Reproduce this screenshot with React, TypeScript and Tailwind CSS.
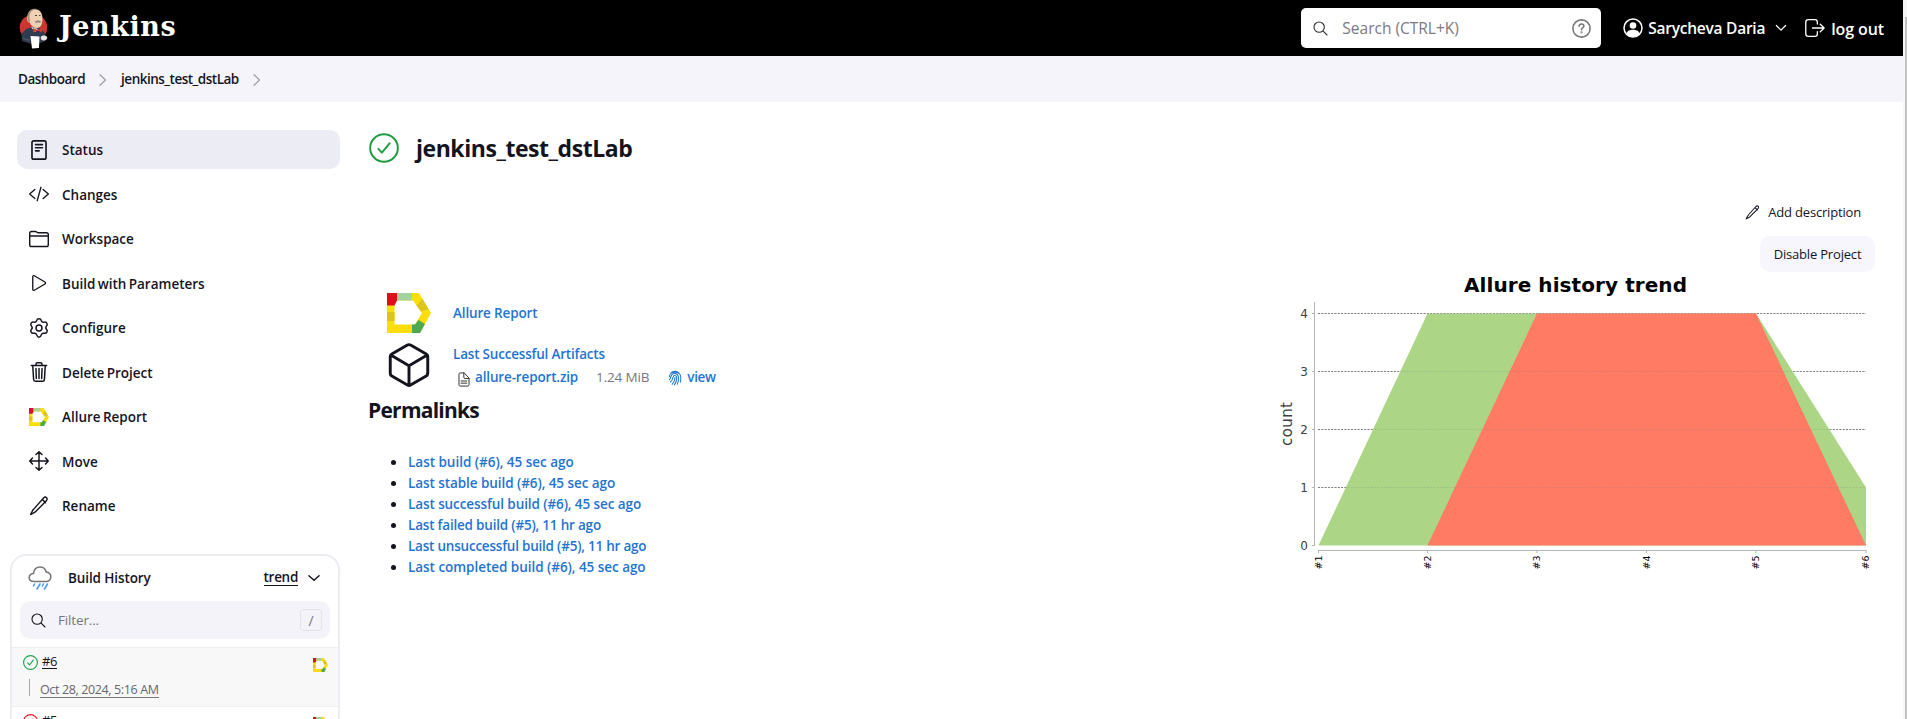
import React from "react";

const LINK = "text-[#1f74d1]";

function AllureLogo({ className }: { className: string }) {
  return (
    <svg viewBox="0 0 44 40" className={className} preserveAspectRatio="none">
      <path fillRule="evenodd" d="M0 0h32l12 20-11 20H0zM7.500 7.500v24H28L35 20 26 7.500z" fill="#fbdd0c" />
      <path d="M0 19h7.500v9H0z" fill="#dcc41e" />
      <path d="M0 0h10v7.500l-2.500 5H0z" fill="#dc0f1a" />
      <path d="M10 0h15v7.500H10z" fill="#a5d3a0" />
      <path d="m35.500 6 6 10-7.500 2.500-4.500-6z" fill="#dcc41e" />
      <path d="m31.500 27 6.500 4-5 9h-8v-8.500h3z" fill="#4ba952" />
    </svg>
  );
}

function Butler() {
  return (
    <svg viewBox="0 0 30 42" className="h-[42px] w-[30px]">
      <ellipse cx="14.500" cy="20.500" rx="13.800" ry="13" fill="#cc3631" />
      <path d="M3 34 2.500 27l4.500-5 6-2 8 1 4 4 3 6-4 4-8 3z" fill="#2f3b4e" />
      <path d="M8.500 9C9.500 3 14 1.500 18 2.500c4 1 5.500 5 5.500 9 0 6-2 9.500-5.500 9.500-3 0-6-2-7-5-3-1-3.500-4-2.500-7z" fill="#efd0b2" />
      <path d="M8.500 10C8.500 4 12 1.500 17 1.700 12 3.500 10.500 6 10.500 10L11 16c-2-1-2.500-3-2.500-6z" fill="#a58d78" />
      <path d="M16 8.500h2M20 8.500h1.500" stroke="#4b3a30" strokeWidth="1.200" fill="none" />
      <path d="M16.500 15.500c2-1.800 4-1.300 5 0" stroke="#8a7f78" strokeWidth="1.800" fill="none" />
      <path d="m12 20 4 5 3-3z" fill="#fff" />
      <path d="m14 21 4.500 2 4.500-2.500v5l-4.500-2-4.500 2z" fill="#d33833" />
      <path d="m11.500 29 9 .5L20 41l-7 .5z" fill="#fff" />
      <path d="M22 29.500c2-1.500 5-1 6 .5s-1 3.500-3 3.500-4-1-3-4z" fill="#e9e5e3" />
      <path d="M4 31c3 2 5 2 7 2" stroke="#566275" fill="none" />
    </svg>
  );
}

type IconProps = { className?: string; children: React.ReactNode; w?: number };
function Ion({ className = "size-5", children, w = 32 }: IconProps) {
  return (
    <svg viewBox="0 0 512 512" className={className} fill="none" stroke="currentColor" strokeWidth={w} strokeLinecap="round" strokeLinejoin="round">
      {children}
    </svg>
  );
}

const Pencil = ({ className }: { className?: string }) => (
  <Ion className={className} w={36}>
    <path d="M372 52c28-28 62-24 78-8s22 50-6 78L172 398c-12 12-26 22-42 30l-90 46 46-90c8-16 18-30 30-42zM338 86l84 84" />
  </Ion>
);

const Search = ({ className }: { className?: string }) => (
  <Ion className={className} w={38}>
    <path d="M210 34a176 176 0 10176 176A176 176 0 00210 34zM338 338l140 140" />
  </Ion>
);

const Check = ({ className, w = 34 }: { className: string; w?: number }) => (
  <Ion className={className} w={w}>
    <circle cx="256" cy="256" r="236" />
    <path d="m352 176-132 160-60-64" />
  </Ion>
);

const items = [
  {
    label: "Status",
    icon: (
      <Ion w={42}>
        <rect x="76" y="22" width="360" height="468" rx="44" />
        <path d="M168 118h176M168 198h176M168 278h92" />
      </Ion>
    ),
  },
  {
    label: "Changes",
    icon: (
      <Ion w={34}>
        <path d="M150 374 16 256l134-118M362 374l134-118-134-118M306 84l-96 344" />
      </Ion>
    ),
  },
  {
    label: "Workspace",
    icon: (
      <Ion w={36}>
        <path d="M18 400V112a48 48 0 0148-48h96c30 0 34 30 64 30h220a48 48 0 0148 48v258a48 48 0 01-48 48H66a48 48 0 01-48-48zM18 178h476" />
      </Ion>
    ),
  },
  {
    label: "Build with Parameters",
    icon: (
      <Ion w={34}>
        <path d="M96 96v320c0 26 18 38 40 26l272-160c20-12 20-40 0-52L136 70c-22-12-40 0-40 26z" />
      </Ion>
    ),
  },
  {
    label: "Configure",
    icon: (
      <Ion w={38}>
        <circle cx="256" cy="256" r="76" />
        <path d="M256 20c40 0 50 16 58 44 12 34 40 50 76 42 34-8 54-2 70 30 16 30 12 46-12 70-24 28-24 56 0 84 24 24 28 44 10 72-18 30-36 36-70 28-38-8-62 8-74 42-8 30-20 60-58 60s-50-30-58-60c-12-34-36-50-74-42-34 8-52 2-70-28-18-28-14-48 10-72 24-28 24-56 0-84-24-24-28-40-12-70 16-32 36-38 70-30 36 8 64-8 76-42 8-28 18-44 58-44z" />
      </Ion>
    ),
  },
  {
    label: "Delete Project",
    icon: (
      <Ion w={38}>
        <path d="m96 100 22 350c2 28 20 42 46 42h184c26 0 44-14 46-42l22-350M60 92h392M180 92V54c0-20 12-34 34-34h84c22 0 34 14 34 34v38M256 166v258M178 166l10 258M334 166l-10 258" />
      </Ion>
    ),
  },
  { label: "Allure Report", icon: <AllureLogo className="h-[18px] w-5" /> },
  {
    label: "Move",
    icon: (
      <Ion w={38}>
        <path d="m180 88 76-68 76 68M180 424l76 68 76-68M424 180l68 76-68 76M88 180l-68 76 68 76M256 24v464M24 256h464" />
      </Ion>
    ),
  },
  { label: "Rename", icon: <Pencil /> },
];

const permalinks = [
  { text: "Last build (#6), 45 sec ago", tracking: "tracking-[-0.02px]" },
  { text: "Last stable build (#6), 45 sec ago", tracking: "tracking-[-0.07px]" },
  { text: "Last successful build (#6), 45 sec ago", tracking: "tracking-[-0.09px]" },
  { text: "Last failed build (#5), 11 hr ago", tracking: "tracking-[-0.2px]" },
  { text: "Last unsuccessful build (#5), 11 hr ago", tracking: "tracking-[-0.22px]" },
  { text: "Last completed build (#6), 45 sec ago", tracking: "tracking-[-0.04px]" },
];

function Header() {
  return (
    <header className="flex h-14 shrink-0 items-center bg-black pl-[19px] pr-[19px] text-white">
      <Butler />
      <span className="ml-[10px] -mt-[3px] font-['DejaVu_Serif',serif] text-[27px] leading-none font-bold tracking-[0.55px]">Jenkins</span>
      <div className="ml-auto flex h-10 w-[300px] items-center rounded-[5px] bg-white pl-3 pr-[10px]">
        <Search className="size-[15px] text-[#333]" />
        <span className="mt-[2px] ml-[14px] text-[15.5px] text-[#7a7a80]">Search (CTRL+K)</span>
        <Ion className="ml-auto size-[19px] text-[#77777d]" w={42}>
          <circle cx="256" cy="256" r="232" />
          <path d="M192 196c2-44 28-62 66-62 36 0 62 22 62 54 0 44-62 48-62 96v6" />
          <circle cx="258" cy="360" r="10" />
        </Ion>
      </div>
      <svg viewBox="0 0 20 20" className="ml-[22px] size-5">
        <circle cx="10" cy="10" r="9" fill="none" stroke="white" strokeWidth="1.500" />
        <circle cx="10" cy="7.500" r="3.300" fill="white" />
        <path d="M3.500 15.500c1-3 3.500-3.700 6.500-3.700s5.500.7 6.500 3.700C14.500 18 12.500 19 10 19s-4.500-1-6.500-3.500z" fill="white" />
      </svg>
      <span className="mt-[2px] ml-[5px] text-[15.5px] font-semibold tracking-[-0.25px]">Sarycheva Daria</span>
      <Ion className="ml-[10px] size-3" w={54}>
        <path d="m60 150 196 196 196-196" />
      </Ion>
      <Ion className="ml-[18px] size-5" w={34}>
        <path d="M316 350v60c0 30-24 60-60 60H86c-36 0-66-24-66-60V102c0-36 30-62 66-62h170c36 0 60 28 60 62v50M390 160l100 96-100 96M190 256h290" />
      </Ion>
      <span className="mt-[1px] ml-[6px] text-[16px] font-semibold tracking-[-0.1px]">log out</span>
    </header>
  );
}

function Crumb() {
  return (
    <Ion className="size-3 text-[#a0a0a8]" w={56}>
      <path d="m130 30 230 226-230 226" />
    </Ion>
  );
}

function BuildHistory() {
  return (
    <section className="ml-[10px] mt-[29px] h-[300px] w-[330px] overflow-hidden rounded-[16px] border-2 border-[#ececf3]">
      <div className="flex h-[45px] items-center pl-[16px] pr-[18px] pb-[2px]">
        <svg viewBox="0 0 24 26" className="h-[26px] w-6" fill="none" strokeWidth="1.600" strokeLinecap="round">
          <path d="M6 16.500C3 16.500 1.200 14.800 1.200 12.500S3 8.800 5.500 8.500C6 4.500 8.500 2 12 2c3.200 0 5.500 1.800 6.200 5 2.800.3 4.600 2 4.600 4.700 0 2.800-2 4.800-4.800 4.800z" stroke="#77777d" />
          <path d="m6.500 19-1 2M12 19l-3 5M15.500 19l-1 2M19.500 19l-3 5" stroke="#4a9cf0" />
        </svg>
        <span className="mt-[1px] ml-4 text-[13.5px] font-semibold tracking-[-0.1px]">Build History</span>
        <span className="mt-[1px] ml-auto border-b-[1.500px] border-[#14141f] text-[13.5px] leading-[15px] font-semibold tracking-[-0.3px]">trend</span>
        <Ion className="ml-[10px] size-3" w={60}>
          <path d="m40 160 216 196 216-196" />
        </Ion>
      </div>
      <div className="mx-2 flex h-[38px] items-center rounded-[10px] bg-[#f4f3fa] pl-[11px] pr-2">
        <Search className="size-[15px]" />
        <span className="mt-[1px] ml-[12px] text-[13.5px] font-medium tracking-[-0.15px] text-[#77777d]">Filter...</span>
        <span className="ml-auto grid h-[22px] w-[22px] place-items-center rounded-[4px] border border-[#e2e2ea] text-[14px] text-[#77777d]">/</span>
      </div>
      <div className="mt-2 h-[60px] border-y border-[#eeeef1] bg-[#f8f8f8] pl-[11px] pr-[11px]">
        <div className="flex h-[30px] items-center">
          <Check className="-mt-[2px] size-[15px] text-[#1ea64b]" w={40} />
          <span className="-mt-[3px] ml-[4px] border-b-[1.500px] border-[#14141f] text-[13px] leading-[14px] font-medium tracking-[-0.4px]">#6</span>
          <AllureLogo className="mt-[3px] mr-[-1px] ml-auto h-[14px] w-[15px]" />
        </div>
        <div className="flex items-start pl-[6px]">
          <span className="mt-[1px] h-[17px] w-px bg-[#a5a5ab]" />
          <span className="mt-[5px] ml-[10px] border-b border-[#77777d] text-[12.5px] leading-[14px] tracking-[-0.37px] text-[#66666d]">Oct 28, 2024, 5:16 AM</span>
        </div>
      </div>
      <div className="flex h-[30px] items-center px-[11px]">
        <Ion className="-mt-[2px] size-[15px] text-[#dc2626]" w={40}>
          <circle cx="256" cy="256" r="236" />
          <path d="m180 180 152 152M332 180 180 332" />
        </Ion>
        <span className="-mt-[4px] ml-[4px] border-b-[1.500px] border-[#14141f] text-[13px] leading-[14px] font-medium tracking-[-0.4px]">#5</span>
        <AllureLogo className="mt-[3px] mr-[-1px] ml-auto h-[14px] w-[15px]" />
      </div>
    </section>
  );
}

function TrendChart() {
  const x = [43.5, 152.5, 262, 371.5, 481, 591];
  const y = (v: number) => 273.5 - v * 58;
  const pts = (vals: [number, number][]) => vals.map(([i, v]) => `${x[i]},${y(v)}`).join(" ");
  const grid = (opacity: number) =>
    [1, 2, 3, 4].map((v) => (
      <line key={v} x1="43" x2="591" y1={y(v)} y2={y(v)} stroke="#808080" strokeOpacity={opacity} strokeDasharray="2 1.3" />
    ));
  return (
    <svg viewBox="0 0 600 300" className="h-[300px] w-[600px]" fontFamily="DejaVu Sans, sans-serif" letterSpacing="0">
      <text x="300.500" y="20" fontSize="20" fontWeight="bold" textAnchor="middle" textLength="223">Allure history trend</text>
      {grid(1)}
      <polygon points={pts([[0, 0], [1, 4], [4, 4], [5, 1], [5, 0]])} fill="#acd685" />
      <polygon points={pts([[1, 0], [2, 4], [4, 4], [5, 0]])} fill="#ff7b64" />
      {grid(0.25)}
      <path d="M39.500 30V273.500M43.500 278.500H591" stroke="#b4b4b4" fill="none" />
      {[0, 1, 2, 3, 4].map((v) => (
        <g key={v}>
          <line x1="37" x2="40" y1={y(v)} y2={y(v)} stroke="#b4b4b4" />
          <text x="33" y={y(v) + 4.5} fontSize="12" textAnchor="end" fill="#404040">{v}</text>
        </g>
      ))}
      {x.map((px, i) => (
        <g key={i}>
          <line x1={px} x2={px} y1="278" y2="281" stroke="#b4b4b4" />
          <text transform={`translate(${px + 3} 297.500) rotate(-90)`} fontSize="9.500">{`#${i + 1}`}</text>
        </g>
      ))}
      <text transform="translate(17 152) rotate(-90)" fontSize="15" textAnchor="middle" textLength="44" fill="#404040">count</text>
    </svg>
  );
}

export default function App() {
  return (
    <div className="flex h-[719px] w-full overflow-hidden bg-white font-['Open_Sans','Noto_Sans',sans-serif] whitespace-nowrap text-[#14141f]">
      <div className="flex min-w-0 flex-1 flex-col">
        <Header />
        <nav className="flex h-[46px] shrink-0 items-center bg-[#f5f4fb] pt-[1px] pl-[18px] text-[13.5px] font-semibold tracking-[-0.5px]">
          <span className="mr-[12px]">Dashboard</span>
          <Crumb />
          <span className="mr-[12px] ml-[12px]">jenkins_test_dstLab</span>
          <Crumb />
        </nav>
        <div className="flex">
          <aside className="w-[369px] shrink-0 pt-7">
            <div className="ml-[17px] flex w-[323px] flex-col gap-[5.5px]">
              {items.map((it, i) => (
                <div key={it.label} className={`flex h-[39px] items-center gap-[13px] rounded-[10px] pl-3 text-[13.5px] font-semibold [word-spacing:-1.2px] ${i === 0 ? "bg-[#ececf5]" : ""}`}>
                  {it.icon}
                  <span className="mt-[2px]">{it.label}</span>
                </div>
              ))}
            </div>
            <BuildHistory />
          </aside>
          <main className="flex flex-1 justify-between pr-[28px]">
            <div>
              <div className="mt-[31px] flex h-[30px] items-center">
                <Check className="size-[30px] text-[#1f9d44]" />
                <h1 className="ml-[17px] text-[23px] font-bold tracking-[-0.45px]">jenkins_test_dstLab</h1>
              </div>
              <div className={`mt-[130px] ml-[18px] flex h-10 items-center text-[13.5px] font-semibold tracking-[-0.15px] ${LINK}`}>
                <AllureLogo className="h-10 w-11" />
                <span className="ml-[22px]">Allure Report</span>
              </div>
              <div className={`mt-[9px] ml-[18px] flex h-[46px] text-[13.5px] font-semibold tracking-[-0.15px] ${LINK}`}>
                <Ion className="mr-[-1.500px] ml-[-3.500px] -mt-[2px] size-[50px] text-[#14141f]" w={30}>
                  <path d="M448 342V170a32 32 0 00-16-27L272 52a32 32 0 00-32 0L80 143a32 32 0 00-16 27v172a32 32 0 0016 27l160 92a32 32 0 0032 0l160-92a32 32 0 0016-27zM69 154l187 110 187-110M256 464V264" />
                </Ion>
                <div className="ml-[21px]">
                  <div className="flex h-[24px] items-center tracking-[-0.2px]">Last Successful Artifacts</div>
                  <div className="flex h-[22px] items-center pl-1">
                    <Ion className="mt-[4px] h-[15px] w-[14px] text-[#333]" w={36}>
                      <path d="M440 221v227c0 30-20 48-48 48H120c-30 0-48-20-48-48V64c0-30 20-48 48-48h130zM250 16v160c0 30 15 45 45 45h145M150 310h210M150 390h210" />
                    </Ion>
                    <span className="ml-[4px]">allure-report.zip</span>
                    <span className="ml-[18px] font-normal text-[#77777d]">1.24 MiB</span>
                    <svg viewBox="0 0 24 28" className="mt-[2px] ml-[19px] h-4 w-[14px]" fill="none" stroke="currentColor" strokeWidth="1.800" strokeLinecap="round">
                      <path d="M5 5c4-4 10-4 14 0M2 12c0-11 20-11 20 0 0 4 .5 6-.5 9M2 17c2-1 2-3 3-6 2-7 12-6 13 1 .5 5 0 9-2 13M4 21c3-2 4-5 4.500-8 .5-5 6.500-4 6.500 0 0 5-1 9-4 13M7 25c3-3 5-7 5-12" />
                    </svg>
                    <span className="ml-[5px] tracking-[-0.4px]">view</span>
                  </div>
                </div>
              </div>
              <h2 className="mt-[6px] -ml-[1px] text-[21px] leading-[32px] font-bold tracking-[-0.75px]">Permalinks</h2>
              <ul className="mt-[26px] pl-[22px] text-[13.5px] leading-[21px] font-semibold">
                {permalinks.map((p) => (
                  <li key={p.text} className="flex items-center">
                    <span className="mr-[12px] size-[5px] rounded-full bg-[#14141f]" />
                    <span className={`${LINK} ${p.tracking}`}>{p.text}</span>
                  </li>
                ))}
              </ul>
            </div>
            <div className="flex flex-col items-end pt-[99px] text-[13px] font-medium tracking-[-0.18px]">
              <div className="mr-[14px] flex h-[22px] items-center">
                <Pencil className="mr-[8px] size-[15px]" />
                <span className="mt-[2px]">Add description</span>
              </div>
              <button className="mt-[13px] h-9 w-[115px] rounded-[10px] bg-[#f7f6fc] pt-[1px]">Disable Project</button>
              <TrendChart />
            </div>
          </main>
        </div>
      </div>
      <div className="flex w-1 flex-col bg-[#f6f6f6]">
        <div className="mt-[17px] ml-[2px] flex-1 bg-[#c1c1c1]" />
      </div>
    </div>
  );
}
